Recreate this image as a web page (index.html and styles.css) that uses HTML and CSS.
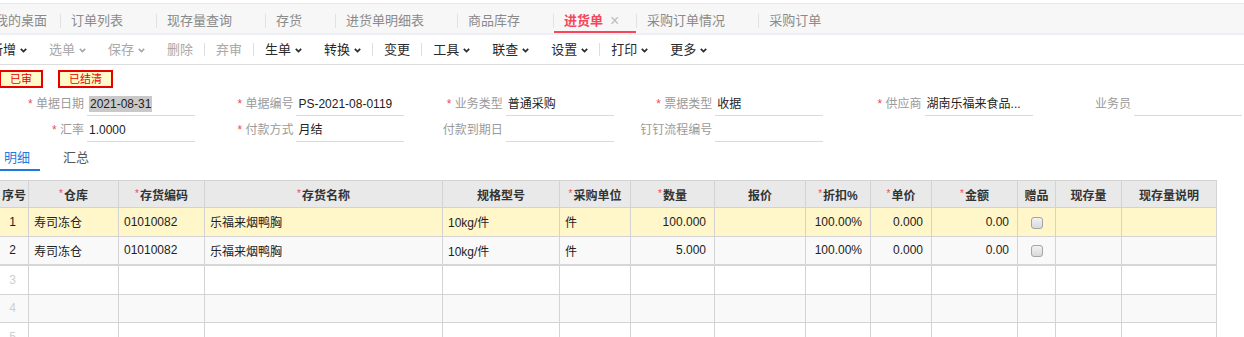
FILE: index.html
```html
<!DOCTYPE html>
<html lang="zh-CN">
<head>
    <meta charset="UTF-8">
    <title>进货单</title>
    <link rel="stylesheet" href="styles.css">
</head>
<body>
    <div class="tabs">
        <div class="tab home">我的桌面</div>
        <span class="tab-sep"></span>
        <div class="tab">订单列表<span class="tab-close"></span></div>
        <span class="tab-sep"></span>
        <div class="tab">现存量查询<span class="tab-close"></span></div>
        <span class="tab-sep"></span>
        <div class="tab">存货<span class="tab-close"></span></div>
        <span class="tab-sep"></span>
        <div class="tab">进货单明细表<span class="tab-close"></span></div>
        <span class="tab-sep"></span>
        <div class="tab">商品库存<span class="tab-close"></span></div>
        <span class="tab-sep"></span>
        <div class="tab active">进货单<span class="tab-close">×</span></div>
        <span class="tab-sep"></span>
        <div class="tab">采购订单情况<span class="tab-close"></span></div>
        <span class="tab-sep"></span>
        <div class="tab">采购订单<span class="tab-close"></span></div>
    </div>

    <div class="toolbar">
        <span class="tool">新增<svg class="caret" viewBox="0 0 7 5"><polyline points="0.8,0.8 3.5,3.6 6.2,0.8"/></svg></span>
        <span class="tool off">选单<svg class="caret" viewBox="0 0 7 5"><polyline points="0.8,0.8 3.5,3.6 6.2,0.8"/></svg></span>
        <span class="tool off">保存<svg class="caret" viewBox="0 0 7 5"><polyline points="0.8,0.8 3.5,3.6 6.2,0.8"/></svg></span>
        <span class="tool off">删除</span>
        <span class="tool-sep"></span>
        <span class="tool off">弃审</span>
        <span class="tool-sep"></span>
        <span class="tool">生单<svg class="caret" viewBox="0 0 7 5"><polyline points="0.8,0.8 3.5,3.6 6.2,0.8"/></svg></span>
        <span class="tool">转换<svg class="caret" viewBox="0 0 7 5"><polyline points="0.8,0.8 3.5,3.6 6.2,0.8"/></svg></span>
        <span class="tool-sep"></span>
        <span class="tool">变更</span>
        <span class="tool-sep"></span>
        <span class="tool">工具<svg class="caret" viewBox="0 0 7 5"><polyline points="0.8,0.8 3.5,3.6 6.2,0.8"/></svg></span>
        <span class="tool">联查<svg class="caret" viewBox="0 0 7 5"><polyline points="0.8,0.8 3.5,3.6 6.2,0.8"/></svg></span>
        <span class="tool">设置<svg class="caret" viewBox="0 0 7 5"><polyline points="0.8,0.8 3.5,3.6 6.2,0.8"/></svg></span>
        <span class="tool-sep"></span>
        <span class="tool">打印<svg class="caret" viewBox="0 0 7 5"><polyline points="0.8,0.8 3.5,3.6 6.2,0.8"/></svg></span>
        <span class="tool">更多<svg class="caret" viewBox="0 0 7 5"><polyline points="0.8,0.8 3.5,3.6 6.2,0.8"/></svg></span>
    </div>

    <div class="badges">
        <span class="badge">已审</span>
        <span class="badge">已结清</span>
    </div>

    <div class="form">
        <div class="field"><label><i>*</i> 单据日期</label><div class="input"><span class="selected">2021-08-31</span></div></div>
        <div class="field"><label><i>*</i> 单据编号</label><div class="input">PS-2021-08-0119</div></div>
        <div class="field"><label><i>*</i> 业务类型</label><div class="input">普通采购</div></div>
        <div class="field"><label><i>*</i> 票据类型</label><div class="input">收据</div></div>
        <div class="field"><label><i>*</i> 供应商</label><div class="input">湖南乐福来食品...</div></div>
        <div class="field"><label>业务员</label><div class="input"></div></div>
        <div class="field"><label><i>*</i> 汇率</label><div class="input">1.0000</div></div>
        <div class="field"><label><i>*</i> 付款方式</label><div class="input">月结</div></div>
        <div class="field"><label>付款到期日</label><div class="input"></div></div>
        <div class="field"><label>钉钉流程编号</label><div class="input"></div></div>
    </div>

    <div class="subtabs">
        <span class="subtab current">明细</span>
        <span class="subtab">汇总</span>
    </div>

    <table class="grid">
        <colgroup>
            <col style="width:32px"><col style="width:90px"><col style="width:86px"><col style="width:238px">
            <col style="width:117px"><col style="width:71px"><col style="width:84px"><col style="width:91px">
            <col style="width:65px"><col style="width:61px"><col style="width:86px"><col style="width:38px">
            <col style="width:66px"><col style="width:95px">
        </colgroup>
        <thead>
            <tr>
                <th>序号</th>
                <th><i>*</i>仓库</th>
                <th><i>*</i>存货编码</th>
                <th><i>*</i>存货名称</th>
                <th>规格型号</th>
                <th><i>*</i>采购单位</th>
                <th><i>*</i>数量</th>
                <th>报价</th>
                <th><i>*</i>折扣%</th>
                <th><i>*</i>单价</th>
                <th><i>*</i>金额</th>
                <th>赠品</th>
                <th>现存量</th>
                <th>现存量说明</th>
            </tr>
        </thead>
        <tbody>
            <tr class="picked">
                <td class="no">1</td><td>寿司冻仓</td><td>01010082</td><td>乐福来烟鸭胸</td>
                <td>10kg/件</td><td>件</td><td class="num">100.000</td><td></td>
                <td class="num">100.00%</td><td class="num">0.000</td><td class="num">0.00</td>
                <td class="mid"><span class="chk"></span></td><td></td><td></td>
            </tr>
            <tr class="alt">
                <td class="no">2</td><td>寿司冻仓</td><td>01010082</td><td>乐福来烟鸭胸</td>
                <td>10kg/件</td><td>件</td><td class="num">5.000</td><td></td>
                <td class="num">100.00%</td><td class="num">0.000</td><td class="num">0.00</td>
                <td class="mid"><span class="chk"></span></td><td></td><td></td>
            </tr>
            <tr class="blank first-blank">
                <td class="no">3</td><td></td><td></td><td></td><td></td><td></td><td></td>
                <td></td><td></td><td></td><td></td><td></td><td></td><td></td>
            </tr>
            <tr class="blank alt">
                <td class="no">4</td><td></td><td></td><td></td><td></td><td></td><td></td>
                <td></td><td></td><td></td><td></td><td></td><td></td><td></td>
            </tr>
            <tr class="blank">
                <td class="no">5</td><td></td><td></td><td></td><td></td><td></td><td></td>
                <td></td><td></td><td></td><td></td><td></td><td></td><td></td>
            </tr>
        </tbody>
    </table>
</body>
</html>
```

FILE: styles.css
```css
body {
    margin: 0;
    font-family: "Liberation Sans", "Noto Sans CJK SC", sans-serif;
    font-size: 12px;
    color: #333;
    background: #fff;
    overflow: hidden;
}
i {
    font-style: normal;
    color: #f5475b;
}

/* page tabs */
.tabs {
    display: flex;
    margin: 3px 0 0 -15px;
    height: 29px;
    background: #f7f7f7;
    border-top: 1px solid #e8e8e8;
    border-bottom: 2px solid #eeeef5;
}
.tab {
    display: flex;
    box-sizing: border-box;
    height: 29px;
    padding: 8px 10px 0 10px;
    line-height: 18px;
    font-size: 13px;
    color: #8a8a8a;
    white-space: nowrap;
    border-bottom: 2px solid transparent;
}
.tab.home {
    padding-right: 13px;
}
.tab-close {
    width: 23px;
    text-align: center;
    font-size: 16px;
    color: #bdbdbd;
}
.tab.active {
    color: #f5475b;
    font-weight: bold;
    border-bottom-color: #f5475b;
}
.tab.active .tab-close {
    font-weight: normal;
}
.tab-sep {
    width: 1px;
    height: 14px;
    margin-top: 10px;
    background: #e2e2e2;
}

/* toolbar */
.toolbar {
    display: flex;
    align-items: center;
    height: 29px;
    margin-left: -21px;
    border-bottom: 1px solid #dcdcdc;
}
.tool {
    display: flex;
    align-items: center;
    padding: 0 11px;
    line-height: 29px;
    font-size: 13px;
    color: #2a2a2a;
    white-space: nowrap;
}
.tool.off {
    color: #a8a8a8;
}
.caret {
    width: 7px;
    height: 5px;
    margin: 2px 0 0 4px;
    fill: none;
    stroke: currentColor;
    stroke-width: 1.7;
}
.tool-sep {
    width: 1px;
    height: 13px;
    background: #dedede;
}

/* status badges */
.badges {
    display: flex;
    gap: 15px;
    margin: 5px 0 0 -1px;
}
.badge {
    height: 14px;
    padding: 0 9px;
    line-height: 14px;
    font-size: 11px;
    color: #e60000;
    background: #fffbc8;
    border: 2px solid #e60000;
}

/* header form */
.form {
    display: grid;
    grid-template-columns: 206px repeat(5, 209.4px);
    row-gap: 3px;
    margin: 5px 0 0 -11px;
}
.field {
    display: flex;
    height: 23px;
}
.field label {
    flex: 1;
    margin-right: 3px;
    text-align: right;
    line-height: 22px;
    color: #9a9a9a;
    white-space: nowrap;
}
.input {
    box-sizing: border-box;
    width: 108px;
    padding-left: 2px;
    line-height: 22px;
    color: #222;
    border-bottom: 1px solid #dadada;
    white-space: nowrap;
    overflow: hidden;
}
.selected {
    padding: 1px 1px;
    background: #c9c9c9;
}

/* detail/summary switch */
.subtabs {
    display: flex;
    gap: 13px;
    margin: 4px 0 0 -6px;
}
.subtab {
    padding: 0 10px;
    line-height: 23px;
    font-size: 13px;
    color: #555;
    border-bottom: 2px solid transparent;
}
.subtab.current {
    color: #1f7ae0;
    border-bottom-color: #1f7ae0;
}

/* detail grid */
.grid {
    margin: 9px 0 0 -4px;
    width: 1220px;
    table-layout: fixed;
    border-collapse: collapse;
}
.grid th,
.grid td {
    border: 1px solid #d3d3d3;
    padding: 0 5px;
    white-space: nowrap;
    overflow: hidden;
}
.grid th {
    height: 26px;
    background: #e9e9e9;
    font-weight: bold;
    color: #333;
    text-align: center;
}
.grid th i {
    font-weight: normal;
    font-size: 10px;
    vertical-align: 3px;
    margin-right: 1px;
}
.grid td {
    height: 27.5px;
    color: #222;
}
.grid tr.picked td {
    background: #fff6ca;
}
.grid tr.alt td {
    background: #f9f9f9;
}
.grid tr.first-blank td {
    border-top: 2px solid #d6d6d6;
}
.grid td.no {
    text-align: center;
}
.grid tr.blank td.no {
    color: #cfcfcf;
}
.grid td.num {
    text-align: right;
    padding-right: 8px;
}
.grid td.mid {
    text-align: center;
}
.chk {
    display: inline-block;
    width: 10px;
    height: 10px;
    vertical-align: middle;
    border: 1px solid #a5a5a5;
    border-radius: 3px;
    background: linear-gradient(#f2f2f2, #d9d9d9);
}
```
